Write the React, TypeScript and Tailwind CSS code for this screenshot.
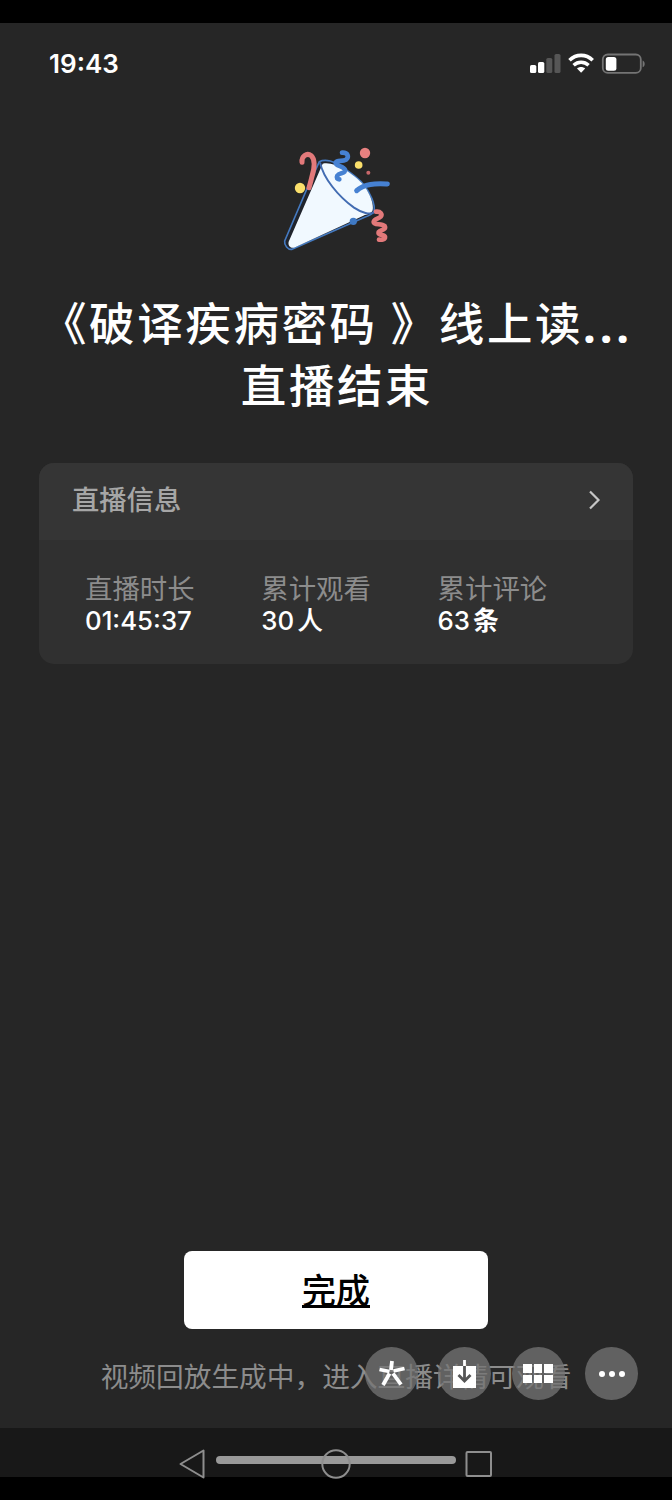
import React from "react";

interface Stat {
  label: string;
  value: string;
  unit?: string;
  unitClass?: string;
}

const stats: Stat[] = [
  { label: "直播时长", value: "01:45:37" },
  { label: "累计观看", value: "30", unit: "人", unitClass: "font-medium" },
  { label: "累计评论", value: "63", unit: "条", unitClass: "font-bold" },
];

const StatusBar: React.FC = () => (
  <div className="flex h-[80px] items-center justify-between pt-[2px] pr-[27.5px] pl-[49px]">
    <span className="text-[26px] leading-none font-semibold text-white">
      19:43
    </span>
    <svg width="115" height="24" viewBox="0 0 115 24" fill="none">
      <rect x="0" y="13" width="6.3" height="8" rx="1.6" fill="#fff" />
      <rect x="8" y="10" width="6.3" height="11" rx="1.6" fill="#fff" />
      <rect x="16.3" y="6" width="6" height="15" rx="1.6" fill="#565656" />
      <rect x="24.5" y="2" width="6" height="19" rx="1.6" fill="#565656" />
      <path d="M39.5 8.2C46.2 1.7 56 1.7 62.7 8.2" stroke="#fff" strokeWidth="3.6" />
      <path d="M43.6 13.2C48 9.2 54.2 9.2 58.6 13.2" stroke="#fff" strokeWidth="3.5" />
      <path d="M51.1 20.8L47 16.6C49.3 14.6 52.9 14.6 55.2 16.6Z" fill="#fff" />
      <rect x="72.8" y="2.5" width="38" height="18.4" rx="5" stroke="#747474" strokeWidth="1.8" />
      <rect x="75.8" y="5" width="10.6" height="13.8" rx="2.5" fill="#fff" />
      <path d="M112.6 8.5C115.4 9.8 115.4 14 112.6 15.2Z" fill="#747474" />
    </svg>
  </div>
);

const PartyPopper: React.FC = () => (
  <svg width="135" height="130" viewBox="0 0 405 390" fill="none">
    <path
      d="M148 80C165 71 195 78 216 96C240 112 268 132 282 150C302 176 316 208 312 228C308 238 296 243 284 247L66 343C54 345 42 330 44 318L108 168Z"
      fill="#20242c"
      stroke="#4479bf"
      strokeWidth="5"
      strokeLinejoin="round"
    />
    <path
      d="M158 86C178 82 200 90 216 100C240 112 268 134 282 152C300 176 312 208 308 226C304 236 292 238 280 242L72 338C62 340 53 332 56 320Z"
      fill="#f1f9ff"
    />
    <path
      d="M150 82C160 130 205 184 252 218C276 234 300 240 312 232"
      stroke="#426cb2"
      strokeWidth="6"
    />
    <path
      d="M96 82C94 64 110 52 124 62C140 78 130 110 126 124C123 138 120 148 117 158"
      stroke="#e2797a"
      strokeWidth="15"
      strokeLinecap="round"
    />
    <path
      d="M216 53C234 52 238 66 228 74C216 81 202 74 197 83C197 94 220 92 225 104C227 118 208 112 202 122C198 130 202 133 208 133"
      stroke="#4681d2"
      strokeWidth="14"
      strokeLinecap="round"
      strokeLinejoin="round"
    />
    <path
      d="M260 167C284 144 320 146 352 147"
      stroke="#4681d2"
      strokeWidth="15"
      strokeLinecap="round"
    />
    <path
      d="M318 230C331 228 338 238 332 245C325 252 312 251 311 261C312 272 334 264 344 273C350 284 332 284 326 291C323 302 343 298 345 305C346 313 336 315 327 314"
      stroke="#e2797a"
      strokeWidth="14"
      strokeLinecap="round"
      strokeLinejoin="round"
    />
    <circle cx="285" cy="54" r="15.5" fill="#e88180" />
    <circle cx="266" cy="90" r="11.5" fill="#fbe06b" />
    <circle cx="295" cy="113" r="6" fill="#c8676a" />
    <circle cx="90" cy="159" r="15.5" fill="#fbe06b" />
    <circle cx="250" cy="259" r="11" fill="#3f79c4" />
  </svg>
);

const InfoCard: React.FC = () => (
  <section className="mx-[39px] mt-[45px] h-[201px] overflow-hidden rounded-[15px] bg-[#303030]">
    <header className="flex h-[77px] items-center justify-between bg-[#353535] pr-[32px] pb-[3px] pl-[33px]">
      <h2 className="pt-[2px] text-[27.3px] leading-[40px] font-medium text-[#a6a6a6]">
        直播信息
      </h2>
      <svg width="13" height="22" viewBox="0 0 13 22" fill="none">
        <path d="M2 2.5L10.5 11L2 19.5" stroke="#c6c6c6" strokeWidth="2.2" />
      </svg>
    </header>
    <dl className="flex pt-[33px] pl-[46px]">
      {stats.map((stat) => (
        <div key={stat.label} className="w-[176.3px]">
          <dt className="text-[27.4px] leading-[32px] text-[#8c8c8c]">
            {stat.label}
          </dt>
          <dd className="flex items-center gap-[3px] text-[25.8px] leading-[32px] font-medium text-white">
            {stat.value}
            {stat.unit && <span className={stat.unitClass}>{stat.unit}</span>}
          </dd>
        </div>
      ))}
    </dl>
  </section>
);

const FloatingTools: React.FC = () => (
  <div className="absolute top-[1347px] left-[364.5px] flex gap-[20.5px]">
    <div className="flex size-[53px] items-center justify-center rounded-full bg-[#767676]/75">
      <svg width="53" height="53" viewBox="0 0 53 53" fill="none">
        <g stroke="#fff" strokeWidth="3.8">
          <path d="M27 14L26 23" />
          <path d="M14.500 22.500L24.500 24.500" />
          <path d="M39.500 21.500L28.500 24" />
          <path d="M24.500 26.500L18 38" />
          <path d="M28 26.500L36 37.500" />
        </g>
      </svg>
    </div>
    <div className="flex size-[53px] items-center justify-center rounded-full bg-[#767676]/75">
      <svg width="53" height="53" viewBox="0 0 53 53" fill="none">
        <path d="M15 19H38V41H15Z" fill="#fff" />
        <path d="M26.5 18V33M20.5 28L26.5 34L32.5 28" stroke="#555" strokeWidth="2.8" />
        <path d="M26.5 13V19" stroke="#fff" strokeWidth="2.8" />
      </svg>
    </div>
    <div className="flex size-[53px] items-center justify-center rounded-full bg-[#767676]/75">
      <div className="grid grid-cols-3 gap-[2px]">
        {[0, 1, 2, 3, 4, 5].map((cell) => (
          <span key={cell} className="size-[8.6px] bg-white" />
        ))}
      </div>
    </div>
    <div className="flex size-[53px] items-center justify-center gap-[4px] rounded-full bg-[#767676]/75">
      <span className="size-[6px] rounded-full bg-white" />
      <span className="size-[6px] rounded-full bg-white" />
      <span className="size-[6px] rounded-full bg-white" />
    </div>
  </div>
);

const NavBar: React.FC = () => (
  <nav className="relative h-[72px] bg-black">
    <div className="flex h-[49px] justify-center bg-[#181818] pt-[28px]">
      <div className="h-[8px] w-[240px] rounded-full bg-[#999]" />
    </div>
    {/* system buttons sit on top of the home indicator */}
    <svg
      className="absolute top-[20px] left-[178px]"
      width="316"
      height="32"
      viewBox="0 0 316 32"
      fill="none"
      stroke="#8e8e8e"
      strokeWidth="2"
      strokeLinejoin="round"
    >
      <path d="M2.5 16L25.5 2.5V29.5Z" />
      <circle cx="158" cy="16" r="13.7" />
      <rect x="288.5" y="4" width="24.5" height="24" rx="1" />
    </svg>
  </nav>
);

const App: React.FC = () => {
  return (
    <div className="relative flex h-[1500px] w-[672px] flex-col overflow-hidden bg-[#262626] font-[Inter,'Noto_Sans_CJK_SC',sans-serif]">
      <div className="h-[23px] shrink-0 bg-black" />
      <StatusBar />
      <div className="flex justify-center pt-[32px] pl-[3px]">
        <PartyPopper />
      </div>
      <h1 className="mt-[29px] text-center text-[45.5px] leading-[62px] font-medium tracking-[2.6px] whitespace-nowrap text-white">
        <span className="flex pl-[41px]">
          <span>《破译疾病密码</span>
          <span className="ml-[13px]">》线上读</span>
          <span className="font-['Noto_Sans'] font-bold tracking-[3.8px]">
            ...
          </span>
        </span>
        <span className="block pl-[2px]">直播结束</span>
      </h1>
      <InfoCard />
      <div className="mt-auto flex flex-col items-center pb-[30px]">
        <button className="h-[78px] w-[304px] rounded-[8px] bg-white text-[34px] font-medium text-black underline decoration-[3px] underline-offset-[2px]">
          完成
        </button>
        <p className="mt-[27px] text-[27.7px] leading-[42px] text-[#8c8c8c]">
          视频回放生成中，进入直播详情可观看
        </p>
      </div>
      <NavBar />
      <FloatingTools />
    </div>
  );
};

export default App;
